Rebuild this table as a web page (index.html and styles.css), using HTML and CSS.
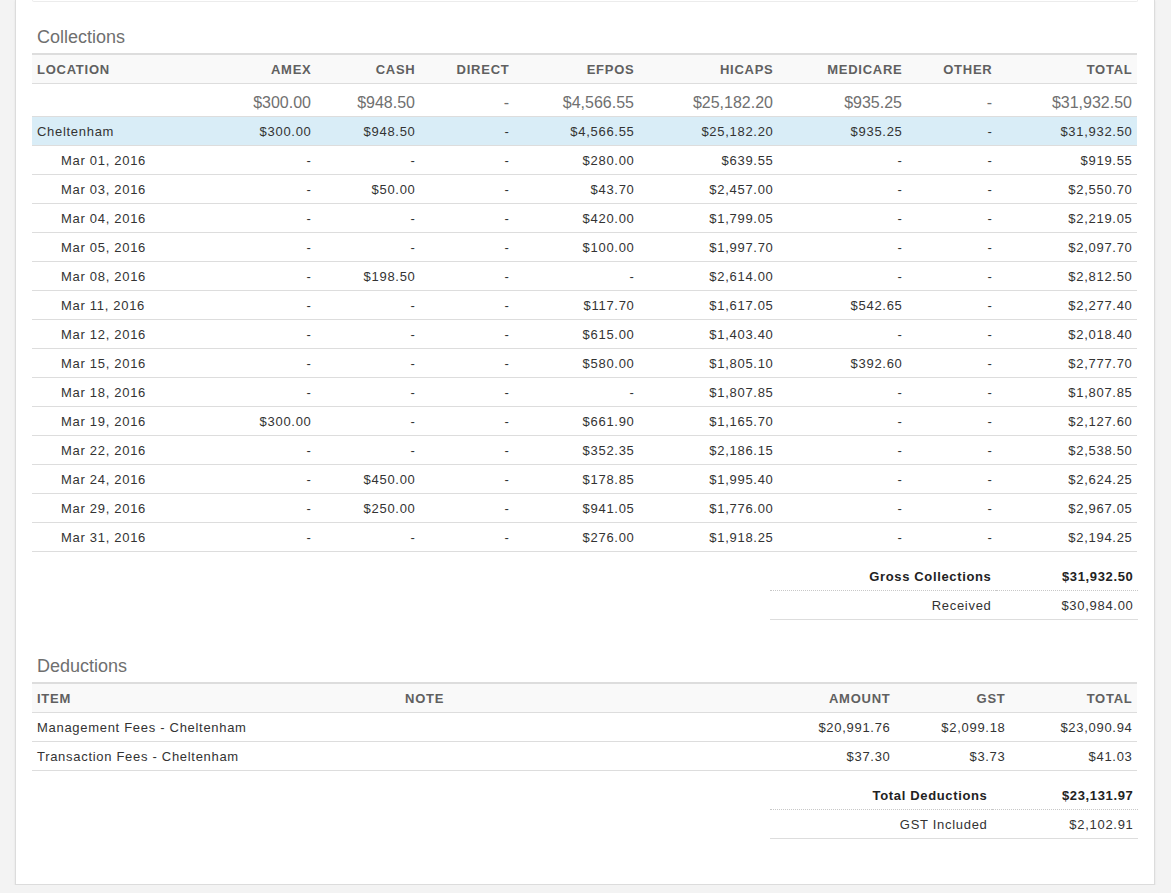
FILE: index.html
```html
<!DOCTYPE html>
<html>
<head>
<meta charset="utf-8">
<link rel="stylesheet" href="styles.css">
</head>
<body>
<div class="panel">
  <div class="prev-box"></div>

  <h3 class="section-title first">Collections</h3>
  <table class="grid">
    <colgroup>
      <col class="c-loc"><col class="c-amex"><col class="c-cash"><col class="c-direct"><col class="c-efpos"><col class="c-hicaps"><col class="c-medicare"><col class="c-other"><col class="c-total">
    </colgroup>
    <thead>
      <tr><th class="l">LOCATION</th><th>AMEX</th><th>CASH</th><th>DIRECT</th><th>EFPOS</th><th>HICAPS</th><th>MEDICARE</th><th>OTHER</th><th>TOTAL</th></tr>
    </thead>
    <tbody>
      <tr class="totals"><td class="l"></td><td>$300.00</td><td>$948.50</td><td>-</td><td>$4,566.55</td><td>$25,182.20</td><td>$935.25</td><td>-</td><td>$31,932.50</td></tr>
      <tr class="loc"><td class="l">Cheltenham</td><td>$300.00</td><td>$948.50</td><td>-</td><td>$4,566.55</td><td>$25,182.20</td><td>$935.25</td><td>-</td><td>$31,932.50</td></tr>
      <tr><td class="l date">Mar 01, 2016</td><td>-</td><td>-</td><td>-</td><td>$280.00</td><td>$639.55</td><td>-</td><td>-</td><td>$919.55</td></tr>
      <tr><td class="l date">Mar 03, 2016</td><td>-</td><td>$50.00</td><td>-</td><td>$43.70</td><td>$2,457.00</td><td>-</td><td>-</td><td>$2,550.70</td></tr>
      <tr><td class="l date">Mar 04, 2016</td><td>-</td><td>-</td><td>-</td><td>$420.00</td><td>$1,799.05</td><td>-</td><td>-</td><td>$2,219.05</td></tr>
      <tr><td class="l date">Mar 05, 2016</td><td>-</td><td>-</td><td>-</td><td>$100.00</td><td>$1,997.70</td><td>-</td><td>-</td><td>$2,097.70</td></tr>
      <tr><td class="l date">Mar 08, 2016</td><td>-</td><td>$198.50</td><td>-</td><td>-</td><td>$2,614.00</td><td>-</td><td>-</td><td>$2,812.50</td></tr>
      <tr><td class="l date">Mar 11, 2016</td><td>-</td><td>-</td><td>-</td><td>$117.70</td><td>$1,617.05</td><td>$542.65</td><td>-</td><td>$2,277.40</td></tr>
      <tr><td class="l date">Mar 12, 2016</td><td>-</td><td>-</td><td>-</td><td>$615.00</td><td>$1,403.40</td><td>-</td><td>-</td><td>$2,018.40</td></tr>
      <tr><td class="l date">Mar 15, 2016</td><td>-</td><td>-</td><td>-</td><td>$580.00</td><td>$1,805.10</td><td>$392.60</td><td>-</td><td>$2,777.70</td></tr>
      <tr><td class="l date">Mar 18, 2016</td><td>-</td><td>-</td><td>-</td><td>-</td><td>$1,807.85</td><td>-</td><td>-</td><td>$1,807.85</td></tr>
      <tr><td class="l date">Mar 19, 2016</td><td>$300.00</td><td>-</td><td>-</td><td>$661.90</td><td>$1,165.70</td><td>-</td><td>-</td><td>$2,127.60</td></tr>
      <tr><td class="l date">Mar 22, 2016</td><td>-</td><td>-</td><td>-</td><td>$352.35</td><td>$2,186.15</td><td>-</td><td>-</td><td>$2,538.50</td></tr>
      <tr><td class="l date">Mar 24, 2016</td><td>-</td><td>$450.00</td><td>-</td><td>$178.85</td><td>$1,995.40</td><td>-</td><td>-</td><td>$2,624.25</td></tr>
      <tr><td class="l date">Mar 29, 2016</td><td>-</td><td>$250.00</td><td>-</td><td>$941.05</td><td>$1,776.00</td><td>-</td><td>-</td><td>$2,967.05</td></tr>
      <tr><td class="l date">Mar 31, 2016</td><td>-</td><td>-</td><td>-</td><td>$276.00</td><td>$1,918.25</td><td>-</td><td>-</td><td>$2,194.25</td></tr>
    </tbody>
  </table>

  <div class="summary-wrap">
    <table class="summary">
      <colgroup><col class="s-label-a"><col class="s-val-a"></colgroup>
      <tr class="strong"><td>Gross Collections</td><td>$31,932.50</td></tr>
      <tr class="sub"><td>Received</td><td>$30,984.00</td></tr>
    </table>
  </div>

  <h3 class="section-title second">Deductions</h3>
  <table class="grid">
    <colgroup>
      <col class="d-item"><col class="d-note"><col class="d-amount"><col class="d-gst"><col class="d-total">
    </colgroup>
    <thead>
      <tr><th class="l">ITEM</th><th class="l">NOTE</th><th>AMOUNT</th><th>GST</th><th>TOTAL</th></tr>
    </thead>
    <tbody>
      <tr><td class="l">Management Fees - Cheltenham</td><td class="l"></td><td>$20,991.76</td><td>$2,099.18</td><td>$23,090.94</td></tr>
      <tr><td class="l">Transaction Fees - Cheltenham</td><td class="l"></td><td>$37.30</td><td>$3.73</td><td>$41.03</td></tr>
    </tbody>
  </table>

  <div class="summary-wrap">
    <table class="summary">
      <colgroup><col class="s-label-b"><col class="s-val-b"></colgroup>
      <tr class="strong"><td>Total Deductions</td><td>$23,131.97</td></tr>
      <tr class="sub"><td>GST Included</td><td>$2,102.91</td></tr>
    </table>
  </div>
</div>
</body>
</html>
```

FILE: styles.css
```css
html, body {
  margin: 0;
  padding: 0;
  background: #f3f3f3;
}

body {
  font-family: "Liberation Sans", Arial, sans-serif;
  font-size: 13px;
  color: #333;
}

.panel {
  box-sizing: border-box;
  width: 1140px;
  margin-left: 15px;
  background: #fff;
  border: 1px solid #dcdcdc;
  border-top: none;
  box-shadow: 0 1px 2px rgba(0, 0, 0, 0.08);
  padding: 0 16px 45px 16px;
}

.prev-box {
  height: 1px;
  border: 1px solid #ececec;
  border-top: none;
  border-radius: 0 0 3px 3px;
}

.section-title {
  font-size: 18px;
  line-height: 20px;
  font-weight: normal;
  color: #6f6f6f;
  margin: 0 0 6px 0;
  padding: 1px 0 0 5px;
}

.section-title.first {
  margin-top: 24px;
}

.section-title.second {
  margin-top: 35px;
  margin-bottom: 6px;
}

.grid {
  width: 1105px;
  table-layout: fixed;
  border-collapse: collapse;
  border-top: 2px solid #dddddd;
}

.grid th,
.grid td {
  padding: 7px 4.5px 5px 5px;
  line-height: 16px;
  text-align: right;
  border-bottom: 1px solid #dddddd;
  white-space: nowrap;
  letter-spacing: 0.7px;
}

.grid th {
  background: #f9f9f9;
  font-weight: bold;
  color: #606060;
  font-size: 13px;
  letter-spacing: 0.75px;
}

.grid .l {
  text-align: left;
}

.grid td.date {
  padding-left: 29px;
}

.grid tr.totals td {
  font-size: 16px;
  line-height: 20px;
  color: #707070;
  letter-spacing: 0;
  padding-top: 9px;
  padding-bottom: 3px;
  padding-right: 5px;
}

.grid tr.loc td {
  background: #d9edf7;
}

.c-loc { width: 180px; }
.c-amex { width: 104px; }
.c-cash { width: 104px; }
.c-direct { width: 94px; }
.c-efpos { width: 125px; }
.c-hicaps { width: 139px; }
.c-medicare { width: 129px; }
.c-other { width: 90px; }
.c-total { width: 140px; }

.d-item { width: 368px; }
.d-note { width: 375px; }
.d-amount { width: 120px; }
.d-gst { width: 115px; }
.d-total { width: 127px; }

.summary-wrap {
  display: flex;
  justify-content: flex-end;
  margin-top: 10px;
}

.summary {
  width: 368px;
  table-layout: fixed;
  border-collapse: collapse;
}

.summary td {
  padding: 7px 4.5px 5px 5px;
  line-height: 16px;
  text-align: right;
  white-space: nowrap;
  letter-spacing: 0.7px;
}

.summary tr.strong td {
  font-weight: bold;
  color: #222;
  border-bottom: 1px dotted #c8c8c8;
  letter-spacing: 0.65px;
}

.summary tr.sub td {
  border-bottom: 1px solid #dddddd;
}

.s-label-a { width: 226px; }
.s-val-a { width: 142px; }
.s-label-b { width: 222px; }
.s-val-b { width: 146px; }
```
